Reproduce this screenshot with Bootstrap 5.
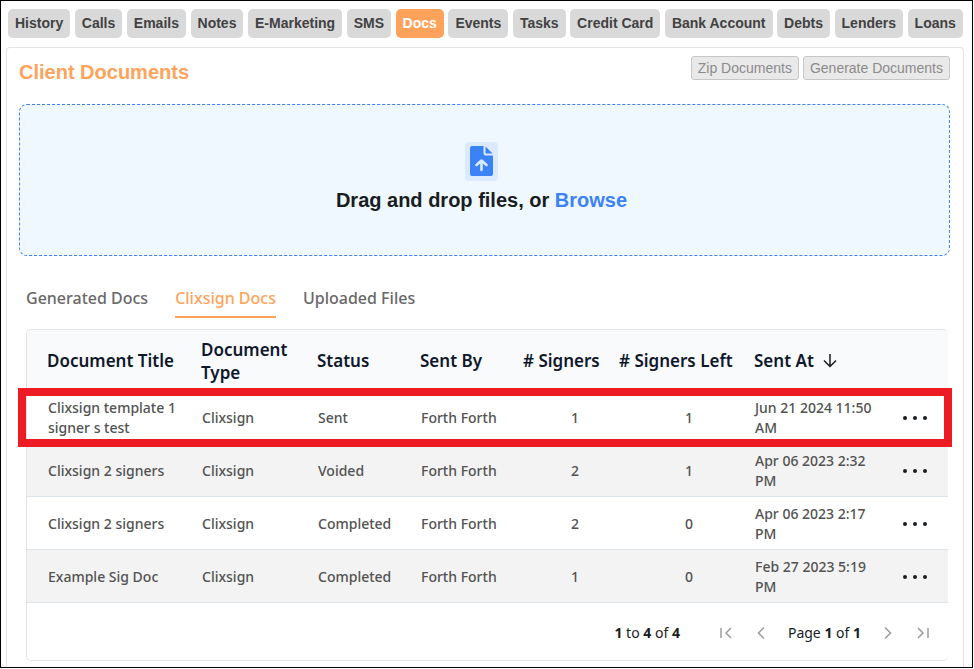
<!DOCTYPE html>
<html lang="en">
<head>
<meta charset="utf-8">
<meta name="viewport" content="width=device-width, initial-scale=1">
<title>Client Documents</title>
<link href="https://cdn.jsdelivr.net/npm/bootstrap@5.3.0/dist/css/bootstrap.min.css" rel="stylesheet">
<style>
:root{--accent:#ffa35c;--blue:#3b82f6;--line:#e2e4e6}
body{font-family:"Noto Sans","Open Sans",sans-serif;font-size:14px;line-height:20px;color:#181d1f;background:#fff}
.arial{font-family:"Liberation Sans",Arial,sans-serif}
.frame{height:calc(100vh - 1px);margin-right:1px;border:1px solid #000;padding:8px 8px 0 7px}
.top-tabs{margin-right:1px}
.top-tabs .nav-link{padding:4px 7px;height:29px;line-height:20px;font-weight:700;color:#424242;background:#d9d9d9;border-radius:5px;white-space:nowrap}
.top-tabs .nav-link.active{color:#fff;background:var(--accent)}
.panel{border:1px solid var(--line);border-bottom:0;border-radius:4px 4px 0 0;margin:9px 0 0 -2px;padding:8px 13px 20px 12px}
.panel-title{font-size:20px;line-height:24px;font-weight:700;color:var(--accent);padding-top:4px}
.tool-btn{height:24px;padding:0 6px;font-size:14px;line-height:22px;border:1px solid #c6c6c6;border-radius:3px}
.tool-btn:disabled{color:#8b8b8b;background:#e9e9e9}
.drop-zone{margin-top:20px;height:152px;background:#f0f8ff;border:1px dashed var(--blue);border-radius:8px;padding:37px 6px 0 0}
.drop-text{margin-top:6px;font-size:20px;line-height:26px;font-weight:700}
.drop-text a{color:var(--blue)}
.doc-tabs{gap:27px;margin:30px 0 0 7px}
.doc-tabs .nav-link{padding:0 0 6px;font-size:16px;line-height:24px;font-weight:500;color:#686868;border-bottom:2px solid transparent}
.doc-tabs .nav-link.active{color:var(--accent);border-color:var(--accent)}
.grid-box{margin:11px 2px 0 7px;border:1px solid var(--line);border-right:0;border-radius:5px}
.grid-table{table-layout:fixed;width:100%;border-collapse:separate;border-spacing:0}
.grid-table th{height:61px;padding:0 0 0 20px;background:#f8fafc;font-size:17px;line-height:23px;font-weight:600;color:#0f172a;vertical-align:middle}
.grid-table th:first-child{border-top-left-radius:4px}
.grid-table th:last-child{border-top-right-radius:4px}
.grid-table td{height:53px;padding:7px 0 5px 21px;color:#525252;font-weight:500;border-bottom:1px solid #dde3ea;vertical-align:middle}
.grid-table tbody tr:nth-child(even) td{background:#f3f3f3}
.grid-table td.signers{padding-right:20px;text-align:right}
.grid-table td.left-count{padding-right:41px;text-align:right}
.grid-table td.action{padding:0 0 3px 19px}
.picked{position:relative}
.picked .action::after{content:"";position:absolute;inset:-3px -4px -3px -9px;border:8px solid #ed1c24;pointer-events:none}
.plain-btn{border:0;background:none;padding:0;display:inline-flex}
.c-title{width:154px}.c-type{width:116px}.c-status{width:103px}.c-by{width:103px}.c-sig{width:96px}.c-left{width:135px}.c-at{width:148px}
.pager{height:57px;padding:2px 17px 0 0}
.page-nav{gap:19px;margin-left:38px}
</style>
</head>
<body>
<div class="frame overflow-hidden">
  <nav class="nav top-tabs arial flex-nowrap justify-content-between" aria-label="Client sections">
    <a class="nav-link" href="#">History</a>
    <a class="nav-link" href="#">Calls</a>
    <a class="nav-link" href="#">Emails</a>
    <a class="nav-link" href="#">Notes</a>
    <a class="nav-link" href="#">E-Marketing</a>
    <a class="nav-link" href="#">SMS</a>
    <a class="nav-link active" aria-current="page" href="#">Docs</a>
    <a class="nav-link" href="#">Events</a>
    <a class="nav-link" href="#">Tasks</a>
    <a class="nav-link" href="#">Credit Card</a>
    <a class="nav-link" href="#">Bank Account</a>
    <a class="nav-link" href="#">Debts</a>
    <a class="nav-link" href="#">Lenders</a>
    <a class="nav-link" href="#">Loans</a>
  </nav>

  <main class="panel">
    <div class="d-flex justify-content-between align-items-start arial">
      <h1 class="panel-title mb-0">Client Documents</h1>
      <div class="d-flex gap-1">
        <button type="button" class="tool-btn" disabled>Zip Documents</button>
        <button type="button" class="tool-btn" disabled>Generate Documents</button>
      </div>
    </div>

    <section class="drop-zone arial text-center">
      <svg class="d-block mx-auto" width="33" height="39" viewBox="0 0 33 39" aria-hidden="true">
        <rect width="33" height="39" rx="4" fill="#dbeafe"/>
        <path d="M7 4H18.500V11.500Q18.500 13.500 20.500 13.500H28V32Q28 34 26 34H7Q5 34 5 32V6Q5 4 7 4Z" fill="#3b82f6"/>
        <path d="M20.500 4.500L27.500 11.500H20.500Z" fill="#3b82f6"/>
        <path d="M16.500 28V19M11.500 23L16.500 18.500L21.500 23" fill="none" stroke="#dbeafe" stroke-width="2.600" stroke-linecap="round" stroke-linejoin="round"/>
      </svg>
      <p class="drop-text mb-0">Drag and drop files, or <a class="text-decoration-none" href="#">Browse</a></p>
    </section>

    <nav class="nav doc-tabs" aria-label="Document lists">
      <a class="nav-link" href="#">Generated Docs</a>
      <a class="nav-link active" aria-current="page" href="#">Clixsign Docs</a>
      <a class="nav-link" href="#">Uploaded Files</a>
    </nav>

    <div class="grid-box">
      <table class="grid-table">
        <colgroup><col class="c-title"><col class="c-type"><col class="c-status"><col class="c-by"><col class="c-sig"><col class="c-left"><col class="c-at"><col></colgroup>
        <thead>
          <tr>
            <th scope="col">Document Title</th><th scope="col">Document Type</th><th scope="col">Status</th><th scope="col">Sent By</th><th scope="col" class="text-nowrap"># Signers</th><th scope="col" class="text-nowrap"># Signers Left</th>
            <th scope="col">
              <span class="d-flex align-items-center gap-2">Sent At
                <svg width="16" height="16" viewBox="0 0 16 16" fill="none" stroke="#181d1f" stroke-width="1.500" aria-hidden="true"><path d="M8 1V13.500M2 7.500L8 13.500L14 7.500"/></svg>
              </span>
            </th>
            <th></th>
          </tr>
        </thead>
        <tbody>
          <tr class="picked"><td>Clixsign template 1 signer s test</td><td>Clixsign</td><td>Sent</td><td>Forth Forth</td><td class="signers">1</td><td class="left-count">1</td><td>Jun 21 2024 11:50 AM</td><td class="action"><button type="button" class="plain-btn" aria-label="Row actions"><svg width="28" height="6" viewBox="0 0 28 6" fill="#181d1f"><circle cx="4" cy="3" r="2"/><circle cx="14" cy="3" r="2"/><circle cx="24" cy="3" r="2"/></svg></button></td></tr>
          <tr><td>Clixsign 2 signers</td><td>Clixsign</td><td>Voided</td><td>Forth Forth</td><td class="signers">2</td><td class="left-count">1</td><td>Apr 06 2023 2:32 PM</td><td class="action"><button type="button" class="plain-btn" aria-label="Row actions"><svg width="28" height="6" viewBox="0 0 28 6" fill="#181d1f"><circle cx="4" cy="3" r="2"/><circle cx="14" cy="3" r="2"/><circle cx="24" cy="3" r="2"/></svg></button></td></tr>
          <tr><td>Clixsign 2 signers</td><td>Clixsign</td><td>Completed</td><td>Forth Forth</td><td class="signers">2</td><td class="left-count">0</td><td>Apr 06 2023 2:17 PM</td><td class="action"><button type="button" class="plain-btn" aria-label="Row actions"><svg width="28" height="6" viewBox="0 0 28 6" fill="#181d1f"><circle cx="4" cy="3" r="2"/><circle cx="14" cy="3" r="2"/><circle cx="24" cy="3" r="2"/></svg></button></td></tr>
          <tr><td>Example Sig Doc</td><td>Clixsign</td><td>Completed</td><td>Forth Forth</td><td class="signers">1</td><td class="left-count">0</td><td>Feb 27 2023 5:19 PM</td><td class="action"><button type="button" class="plain-btn" aria-label="Row actions"><svg width="28" height="6" viewBox="0 0 28 6" fill="#181d1f"><circle cx="4" cy="3" r="2"/><circle cx="14" cy="3" r="2"/><circle cx="24" cy="3" r="2"/></svg></button></td></tr>
        </tbody>
      </table>
      <div class="pager d-flex justify-content-end align-items-center">
        <span><b>1</b> to <b>4</b> of <b>4</b></span>
        <div class="page-nav d-flex align-items-center">
          <button type="button" class="plain-btn" aria-label="First page"><svg width="16" height="16" viewBox="0 0 16 16" fill="none" stroke="#999c9e" stroke-width="1.500"><path d="M3 3V13M13 3L8 8L13 13"/></svg></button>
          <button type="button" class="plain-btn" aria-label="Previous page"><svg width="16" height="16" viewBox="0 0 16 16" fill="none" stroke="#999c9e" stroke-width="1.500"><path d="M11 2.500L5.500 8L11 13.500"/></svg></button>
          <span>Page <b>1</b> of <b>1</b></span>
          <button type="button" class="plain-btn" aria-label="Next page"><svg width="16" height="16" viewBox="0 0 16 16" fill="none" stroke="#999c9e" stroke-width="1.500"><path d="M5 2.500L10.500 8L5 13.500"/></svg></button>
          <button type="button" class="plain-btn" aria-label="Last page"><svg width="16" height="16" viewBox="0 0 16 16" fill="none" stroke="#999c9e" stroke-width="1.500"><path d="M13 3V13M3 3L8 8L3 13"/></svg></button>
        </div>
      </div>
    </div>
  </main>
</div>
<script src="https://cdn.jsdelivr.net/npm/bootstrap@5.3.0/dist/js/bootstrap.bundle.min.js"></script>
</body>
</html>
